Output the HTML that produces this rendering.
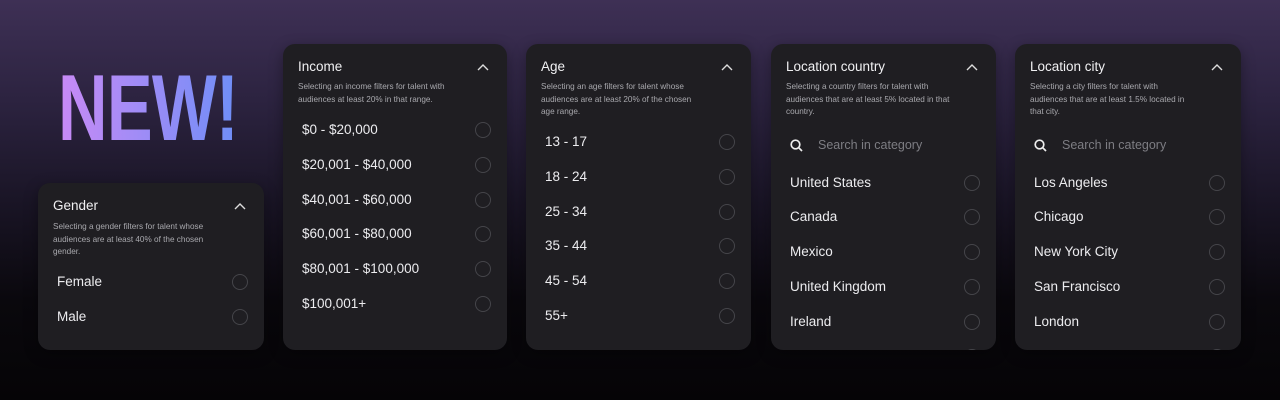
<!DOCTYPE html><html><head><style>
*{margin:0;padding:0;box-sizing:border-box}
body{width:1280px;height:400px;overflow:hidden;background:linear-gradient(180deg,#3e3055 0%,#2c2340 25%,#1a1526 50%,#0a080d 75%,#050406 100%);font-family:"Liberation Sans",sans-serif;position:relative}
.new{position:absolute;left:58px;top:58px;font-weight:bold;font-size:94px;line-height:100px;letter-spacing:-1px;background:linear-gradient(90deg,#c98af6,#6e8ef7);-webkit-background-clip:text;color:transparent;transform:scaleX(0.73);transform-origin:left;white-space:nowrap}
.card{position:absolute;background:#1f1e22;border-radius:12px;overflow:hidden;box-shadow:0 4px 14px rgba(0,0,0,.35)}
.t{position:absolute;left:15px;font-size:13.5px;color:#f0f0f2}
.chev{position:absolute;right:18px;width:12px;height:8px}
.d{position:absolute;left:15px;font-size:8.2px;line-height:12.5px;color:#a9a9ae;width:168px}
.it{position:absolute;left:19px;right:16px;height:20px;font-size:13.5px;color:#ececef;line-height:20px}
.it i{position:absolute;right:0;top:2px;width:16px;height:16px;border:1.3px solid #45454a;border-radius:50%}
.s{position:absolute;left:19px;font-size:12.5px;color:#7d7d83;line-height:20px}
.s svg{position:absolute;left:0;top:4px}
.s span{margin-left:28px}
</style></head><body>
<div class="new">NEW!</div>

<div class="card" style="left:38px;top:183px;width:226px;height:167px">
<div class="t" style="top:15px">Gender</div>
<svg class="chev" style="top:19px" viewBox="0 0 12 8"><path d="M1 7L6 2L11 7" stroke="#ddd" stroke-width="1.4" fill="none"/></svg>
<div class="d" style="top:38px;width:160px">Selecting a gender filters for talent whose audiences are at least 40% of the chosen gender.</div>
<div class="it" style="top:89px">Female<i></i></div>
<div class="it" style="top:124px">Male<i></i></div>
</div>

<div class="card" style="left:283px;top:44px;width:224px;height:306px">
<div class="t" style="top:15px">Income</div>
<svg class="chev" style="top:19px" viewBox="0 0 12 8"><path d="M1 7L6 2L11 7" stroke="#ddd" stroke-width="1.4" fill="none"/></svg>
<div class="d" style="top:37px">Selecting an income filters for talent with audiences at least 20% in that range.</div>
<div class="it" style="top:76px">$0 - $20,000<i></i></div>
<div class="it" style="top:111px">$20,001 - $40,000<i></i></div>
<div class="it" style="top:146px">$40,001 - $60,000<i></i></div>
<div class="it" style="top:180px">$60,001 - $80,000<i></i></div>
<div class="it" style="top:215px">$80,001 - $100,000<i></i></div>
<div class="it" style="top:250px">$100,001+<i></i></div>
</div>

<div class="card" style="left:526px;top:44px;width:225px;height:306px">
<div class="t" style="top:15px">Age</div>
<svg class="chev" style="top:19px" viewBox="0 0 12 8"><path d="M1 7L6 2L11 7" stroke="#ddd" stroke-width="1.4" fill="none"/></svg>
<div class="d" style="top:37px;width:160px">Selecting an age filters for talent whose audiences are at least 20% of the chosen age range.</div>
<div class="it" style="top:88px">13 - 17<i></i></div>
<div class="it" style="top:123px">18 - 24<i></i></div>
<div class="it" style="top:158px">25 - 34<i></i></div>
<div class="it" style="top:192px">35 - 44<i></i></div>
<div class="it" style="top:227px">45 - 54<i></i></div>
<div class="it" style="top:262px">55+<i></i></div>
</div>

<div class="card" style="left:771px;top:44px;width:225px;height:306px">
<div class="t" style="top:15px">Location country</div>
<svg class="chev" style="top:19px" viewBox="0 0 12 8"><path d="M1 7L6 2L11 7" stroke="#ddd" stroke-width="1.4" fill="none"/></svg>
<div class="d" style="top:37px;width:172px">Selecting a country filters for talent with audiences that are at least 5% located in that country.</div>
<div class="s" style="top:91px"><svg width="13" height="13" viewBox="0 0 13 13"><circle cx="5.5" cy="5.5" r="4.3" stroke="#eee" stroke-width="1.7" fill="none"/><path d="M8.7 8.7L12 12" stroke="#eee" stroke-width="1.7"/></svg><span>Search in category</span></div>
<div class="it" style="top:129px">United States<i></i></div>
<div class="it" style="top:163px">Canada<i></i></div>
<div class="it" style="top:198px">Mexico<i></i></div>
<div class="it" style="top:233px">United Kingdom<i></i></div>
<div class="it" style="top:268px">Ireland<i></i></div>
<div class="it" style="top:303px"><i></i></div>
</div>

<div class="card" style="left:1015px;top:44px;width:226px;height:306px">
<div class="t" style="top:15px">Location city</div>
<svg class="chev" style="top:19px" viewBox="0 0 12 8"><path d="M1 7L6 2L11 7" stroke="#ddd" stroke-width="1.4" fill="none"/></svg>
<div class="d" style="top:37px;width:162px">Selecting a city filters for talent with audiences that are at least 1.5% located in that city.</div>
<div class="s" style="top:91px"><svg width="13" height="13" viewBox="0 0 13 13"><circle cx="5.5" cy="5.5" r="4.3" stroke="#eee" stroke-width="1.7" fill="none"/><path d="M8.7 8.7L12 12" stroke="#eee" stroke-width="1.7"/></svg><span>Search in category</span></div>
<div class="it" style="top:129px">Los Angeles<i></i></div>
<div class="it" style="top:163px">Chicago<i></i></div>
<div class="it" style="top:198px">New York City<i></i></div>
<div class="it" style="top:233px">San Francisco<i></i></div>
<div class="it" style="top:268px">London<i></i></div>
<div class="it" style="top:303px"><i></i></div>
</div>
</body></html>
